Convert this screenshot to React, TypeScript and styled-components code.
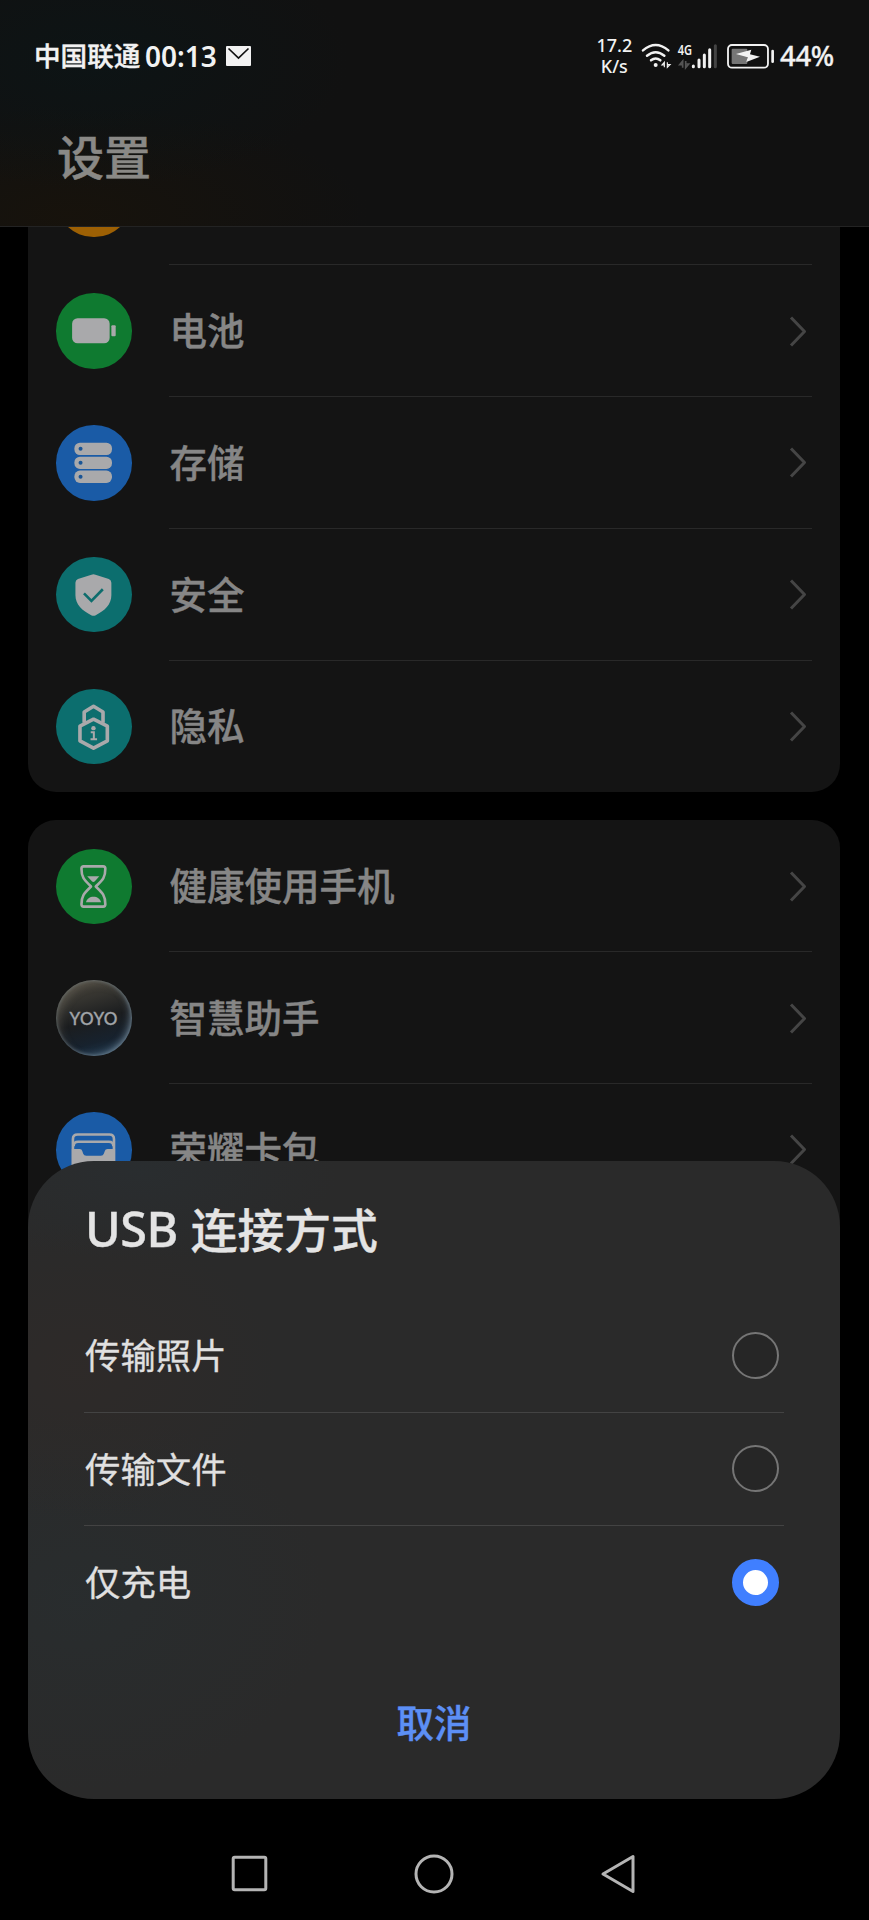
import React from "react";
import styled, { createGlobalStyle } from "styled-components";

const GlobalStyle = createGlobalStyle`
  * { box-sizing: border-box; }
  html, body { margin: 0; padding: 0; background: #000; }
  svg { display: block; flex-shrink: 0; }
`;

const cjk = `"Noto Sans CJK SC", sans-serif`;
const latin = `"Noto Sans", "Noto Sans CJK SC", sans-serif`;

const Screen = styled.main`
  position: relative;
  display: flex;
  flex-direction: column;
  width: 869px;
  height: 1920px;
  overflow: hidden;
  background: #000;
  font-family: ${cjk};
  font-weight: 500;
`;

const Header = styled.header`
  flex: none;
  height: 227px;
  border-bottom: 1px solid #232323;
  background:
    radial-gradient(ellipse 260px 130px at 90px 60px, rgba(10, 22, 24, 0.6), transparent),
    radial-gradient(ellipse 300px 110px at 70px 215px, rgba(25, 19, 10, 0.75), transparent),
    #111111;
`;

const StatusBar = styled.div`
  display: flex;
  align-items: center;
  justify-content: space-between;
  height: 112px;
  padding: 0 32px 0 34px;
  color: #f2f2f2;
`;

const StatusGroup = styled.div`
  display: flex;
  align-items: center;
`;

const Carrier = styled.span`
  width: 111px;
  padding-bottom: 2px;
  font-size: 26.6px;
  line-height: 40px;
  white-space: nowrap;
  -webkit-text-stroke: 0.4px currentColor;
`;

const Clock = styled.span`
  width: 81px;
  padding-bottom: 1px;
  font-family: ${latin};
  font-size: 28px;
  font-weight: 600;
  line-height: 40px;
  white-space: nowrap;
`;

const Speed = styled.div`
  width: 38px;
  margin-right: 8px;
  font-family: ${latin};
  font-size: 18px;
  font-weight: 500;
  line-height: 21px;
  text-align: center;
  white-space: nowrap;
`;

const StatusIcons = styled.div`
  display: flex;
  align-items: center;
  gap: 5px;

  svg:last-child {
    margin-left: 4px;
  }
`;

const Percent = styled.span`
  width: 58px;
  margin-left: 4px;
  padding: 0 0 1px 1px;
  font-family: ${latin};
  font-size: 27.5px;
  font-weight: 500;
  letter-spacing: -0.3px;
  line-height: 40px;
  white-space: nowrap;
  -webkit-text-stroke: 0.3px currentColor;
`;

const PageTitle = styled.h1`
  margin: 8px 0 0 57px;
  font-size: 47px;
  font-weight: 500;
  line-height: 70px;
  color: #8a8986;
  -webkit-text-stroke: 0.5px currentColor;
`;

const ListViewport = styled.div`
  flex: 1;
  overflow: hidden;
`;

const ListContent = styled.div`
  display: flex;
  flex-direction: column;
  gap: 28px;
  margin-top: -93.6px;
  padding: 0 29px 0 28px;
`;

const Card = styled.section<{ $minHeight?: number }>`
  min-height: ${(p) => p.$minHeight ?? 0}px;
  border-radius: 28px;
  background: #141414;
`;

const Row = styled.div`
  display: flex;
  align-items: center;
  height: 131.8px;
  padding-left: 28px;
`;

const RowBody = styled.div<{ $last?: boolean }>`
  display: flex;
  flex: 1;
  align-items: center;
  justify-content: space-between;
  height: 100%;
  margin: 0 28px 0 37.5px;
  padding-right: 5px;
  border-bottom: 1px solid ${(p) => (p.$last ? "transparent" : "#292929")};
`;

const RowLabel = styled.span`
  padding: 0 0 3px 0.5px;
  font-size: 37.5px;
  line-height: 56px;
  color: #868686;
  -webkit-text-stroke: 0.4px currentColor;
`;

const Disc = styled.div<{ $color: string }>`
  width: 75.5px;
  height: 75.5px;
  flex: none;
  border-radius: 50%;
  background: ${(p) => p.$color};
`;

const Orb = styled(Disc)`
  display: flex;
  align-items: center;
  justify-content: center;
  box-shadow:
    inset 0 0 3px 1px rgba(130, 145, 155, 0.35),
    inset -5px -3px 7px -3px rgba(130, 155, 175, 0.6),
    inset 5px 5px 9px -2px rgba(140, 135, 120, 0.35);
`;

const OrbText = styled.span`
  padding-top: 1px;
  font-family: Lato, sans-serif;
  font-size: 17px;
  font-weight: 500;
  letter-spacing: 0.4px;
  color: #a0a4a8;
  -webkit-text-stroke: 0.3px currentColor;
`;

const Sheet = styled.section`
  position: absolute;
  left: 28px;
  top: 1161px;
  display: flex;
  flex-direction: column;
  width: 812px;
  height: 638px;
  padding: 31px 56px 0;
  border-radius: 66px;
  background:
    radial-gradient(ellipse 200px 90px at 110px 10px, rgba(41, 47, 51, 0.6), transparent),
    radial-gradient(ellipse 200px 150px at 50px 210px, rgba(48, 42, 40, 0.65), transparent),
    radial-gradient(ellipse 250px 190px at 50px 440px, rgba(40, 46, 48, 0.65), transparent),
    #2a2a2a;
`;

const SheetTitle = styled.h2`
  display: flex;
  align-items: center;
  gap: 13px;
  height: 72px;
  margin: 0 0 35px;
  font-size: 46.8px;
  font-weight: 500;
  line-height: 72px;
  color: #e4e4e4;
  -webkit-text-stroke: 0.4px currentColor;
`;

const LatinWord = styled.span`
  padding-left: 1px;
  font-family: ${latin};
  font-size: 48.5px;
  letter-spacing: -0.5px;
  -webkit-text-stroke: 0.4px currentColor;
`;

const Option = styled.label<{ $last?: boolean }>`
  display: flex;
  align-items: center;
  justify-content: space-between;
  height: 113.6px;
  padding-right: 5px;
  border-bottom: 1px solid ${(p) => (p.$last ? "transparent" : "#434343")};
`;

const OptionText = styled.span`
  padding: 0 0 2px 1px;
  font-size: 35.4px;
  font-weight: 400;
  line-height: 54px;
  color: #e0e0e0;
  -webkit-text-stroke: 0.3px currentColor;
`;

const Radio = styled.span<{ $checked: boolean }>`
  width: 47px;
  height: 47px;
  border-radius: 50%;
  border: ${(p) => (p.$checked ? "11.5px solid #407fff" : "2px solid #757575")};
  background: ${(p) => (p.$checked ? "#fff" : "#262626")};
`;

const CancelButton = styled.button`
  align-self: center;
  margin-top: 53px;
  padding: 0 40px;
  border: 0;
  background: none;
  font-family: ${cjk};
  font-size: 37.5px;
  font-weight: 500;
  line-height: 56px;
  color: #5c8ff5;
  -webkit-text-stroke: 0.4px currentColor;
`;

const NavBar = styled.nav`
  display: flex;
  flex: none;
  align-items: center;
  justify-content: space-between;
  height: 93px;
  padding: 0 233px 0 231px;
`;

const ink = "#a9a9ab";

const MailIcon = () => (
  <svg width="25" height="20" viewBox="0 0 25 20">
    <rect width="25" height="20" rx="1" fill="#f2f2f2" />
    <path d="M2.5 2.5 12.5 12 22.5 2.5" fill="none" stroke="#111" strokeWidth="1.7" />
  </svg>
);

const WifiIcon = () => (
  <svg width="30.7" height="30" viewBox="214 60 92 90" fill="none" stroke="#f2f2f2" strokeWidth="7.5" strokeLinecap="round">
    <path d="M220 88Q258 56 296 88" />
    <path d="M232 104Q258 83 284 104" />
    <path d="M244 118Q258 107 272 118" />
    <circle cx="258" cy="132" r="6" fill="#f2f2f2" stroke="none" />
    <path d="M284 139V124L277 132H284M293 124V139L301 131H293" strokeWidth="3.5" strokeLinecap="butt" />
  </svg>
);

const SignalIcon = () => (
  <svg width="40.7" height="30" viewBox="320 60 122 90">
    <text x="322" y="101" fill="#f2f2f2" fontFamily="Noto Sans" fontSize="43" fontWeight="600" textLength="43" lengthAdjust="spacingAndGlyphs">
      4G
    </text>
    <path d="M337 140V120L328 131H337M346 120V140L355 129H346" fill="none" stroke="#555" strokeWidth="5" />
    <g stroke="#f2f2f2" strokeWidth="9" strokeLinecap="round">
      <path d="M369 135V137M386 117V137M402 102V137M418 86V137" />
      <path d="M435 74V137" stroke="#444" />
    </g>
  </svg>
);

const StatusBatteryIcon = () => (
  <svg width="48.3" height="30" viewBox="469 62 145 90">
    <rect x="472" y="74" width="120" height="68" rx="12" fill="none" stroke="#f2f2f2" strokeWidth="5.5" />
    <rect x="483" y="85" width="47" height="46" rx="3" fill="#767676" />
    <path d="M496 101 542 88 538 102 568 109 527 125 531 111Z" fill="#f2f2f2" />
    <path d="M606 92V124" stroke="#f2f2f2" strokeWidth="8" strokeLinecap="round" />
  </svg>
);

const Chevron = () => (
  <svg width="18" height="32" viewBox="0 0 18 32" fill="none" stroke="#454545" strokeWidth="3" strokeLinejoin="round">
    <path d="M2 2.5 15.5 16.5 2 30.5" />
  </svg>
);

const BatteryGlyph = () => (
  <svg viewBox="0 0 75 75" fill={ink}>
    <rect x="16" y="25" width="37.3" height="25" rx="5.5" />
    <rect x="55" y="32" width="4.3" height="11" rx="1" />
  </svg>
);

const StorageGlyph = () => (
  <svg viewBox="0 0 75 75" fill={ink}>
    {[17.6, 31.5, 45.3].map((y) => (
      <g key={y}>
        <rect x="18.3" y={y} width="37.3" height="12.2" rx="5.5" />
        <circle cx="24.4" cy={y + 6.1} r="2" fill="#1a5596" />
      </g>
    ))}
  </svg>
);

const ShieldGlyph = () => (
  <svg viewBox="0 0 75 75" fill="none">
    <path
      d="M35.2 17.6Q37.2 16.8 39.2 17.6L52.5 21.8Q55 22.8 55 25.5V38C55 47 48.5 53.5 39 58Q37.2 58.8 35.4 58C26 53.5 19.3 47 19.3 38V25.5Q19.3 22.8 21.8 21.8Z"
      fill={ink}
    />
    <path d="M27.8 36.2 35.2 43.6 46.5 32" stroke="#0d6d6d" strokeWidth="2.6" />
  </svg>
);

const PrivacyGlyph = () => (
  <svg viewBox="0 0 75 75" fill="none" stroke={ink} strokeWidth="3.6" strokeLinejoin="round">
    <path d="M37.3 30 51 36.8V51.5L37.3 58.8 23.8 51.5V36.8Z" />
    <path d="M28 33.5V22.8L37.3 17.2 46.7 22.8V33.5" />
    <circle cx="37.2" cy="38.9" r="2.2" fill={ink} stroke="none" />
    <path d="M34.5 43H37.6V49.8M34.3 49.8H40.8" strokeWidth="2" strokeLinejoin="miter" />
  </svg>
);

const HourglassGlyph = () => (
  <svg viewBox="0 0 75 75" fill="none" stroke={ink} strokeWidth="2.6" strokeLinejoin="round">
    <path d="M27.5 17.3H46.8Q49 17.3 49 19.5C49 29 46 31 39.5 37.3C46 43.5 49 46 49 55Q49 57.3 46.8 57.3H27.5Q25.3 57.3 25.3 55C25.3 46 28.5 43.5 34.8 37.3C28.5 31 25.3 29 25.3 19.5Q25.3 17.3 27.5 17.3Z" />
    <path d="M31 27H43L38.6 32Q37.1 33.6 35.6 32Z" fill={ink} stroke="none" />
    <path d="M29.8 53C31 45.5 43.5 45.5 44.7 53Z" fill={ink} stroke="none" />
  </svg>
);

const WalletGlyph = () => (
  <svg viewBox="0 0 75 75" fill="none" stroke={ink} strokeWidth="2.6">
    <path d="M16.8 54V27Q16.8 22.4 21.5 22.4H53Q57.6 22.4 57.6 27V54" />
    <path d="M17.5 34Q17.5 29.6 22 29.6H52.5Q57 29.6 57 34" />
    <path
      d="M15.7 36.8H23.5Q25.6 36.8 26.2 39L27 41.4Q27.8 43.4 30 43.4H44.6Q46.8 43.4 47.5 41.4L48.4 39Q49 36.8 51.2 36.8H58.7V52Q58.7 56 54 56H20.5Q15.7 56 15.7 52Z"
      fill={ink}
      stroke="none"
    />
  </svg>
);

type Item = { label: string; icon: React.ReactNode };

const deviceItems: Item[] = [
  { label: "", icon: <Disc $color="#9d6004" /> },
  { label: "电池", icon: <Disc $color="#0f7a30"><BatteryGlyph /></Disc> },
  { label: "存储", icon: <Disc $color="#1a5ba6"><StorageGlyph /></Disc> },
  { label: "安全", icon: <Disc $color="#0c6e6e"><ShieldGlyph /></Disc> },
  { label: "隐私", icon: <Disc $color="#0c6e6e"><PrivacyGlyph /></Disc> },
];

const serviceItems: Item[] = [
  { label: "健康使用手机", icon: <Disc $color="#0f7a30"><HourglassGlyph /></Disc> },
  {
    label: "智慧助手",
    icon: (
      <Orb $color="linear-gradient(165deg, #4a453b 0%, #34332f 28%, #1b1d1f 52%, #17222e 76%, #24415a 100%)">
        <OrbText>YOYO</OrbText>
      </Orb>
    ),
  },
  { label: "荣耀卡包", icon: <Disc $color="#1a5ba6"><WalletGlyph /></Disc> },
];

const SettingsCard = ({ items, minHeight }: { items: Item[]; minHeight?: number }) => (
  <Card $minHeight={minHeight}>
    {items.map((item, i) => (
      <Row key={i}>
        {item.icon}
        <RowBody $last={i === items.length - 1}>
          <RowLabel>{item.label}</RowLabel>
          {item.label && <Chevron />}
        </RowBody>
      </Row>
    ))}
  </Card>
);

const usbModes = ["传输照片", "传输文件", "仅充电"];

export default function App() {
  return (
    <>
      <GlobalStyle />
      <Screen>
        <Header>
          <StatusBar>
            <StatusGroup>
              <Carrier>中国联通</Carrier>
              <Clock>00:13</Clock>
              <MailIcon />
            </StatusGroup>
            <StatusGroup>
              <Speed>
                17.2
                <br />
                K/s
              </Speed>
              <StatusIcons>
                <WifiIcon />
                <SignalIcon />
                <StatusBatteryIcon />
              </StatusIcons>
              <Percent>44%</Percent>
            </StatusGroup>
          </StatusBar>
          <PageTitle>设置</PageTitle>
        </Header>
        <ListViewport>
          <ListContent>
            <SettingsCard items={deviceItems} />
            <SettingsCard items={serviceItems} minHeight={528} />
          </ListContent>
        </ListViewport>
        <NavBar>
          <svg width="37" height="37" viewBox="0 0 37 37" fill="none" stroke="#b4b4b4" strokeWidth="3">
            <rect x="2.2" y="2.2" width="32.6" height="32.6" rx="1.5" />
          </svg>
          <svg width="40" height="40" viewBox="0 0 40 40" fill="none" stroke="#b4b4b4" strokeWidth="3">
            <circle cx="20" cy="20" r="18" />
          </svg>
          <svg width="36" height="40" viewBox="0 0 36 40" fill="none" stroke="#b4b4b4" strokeWidth="3" strokeLinejoin="round">
            <path d="M3 20 33 2.5V37.5Z" />
          </svg>
        </NavBar>
        <Sheet>
          <SheetTitle>
            <LatinWord>USB</LatinWord>
            <span>连接方式</span>
          </SheetTitle>
          {usbModes.map((mode, i) => (
            <Option key={mode} $last={i === usbModes.length - 1}>
              <OptionText>{mode}</OptionText>
              <Radio $checked={mode === "仅充电"} />
            </Option>
          ))}
          <CancelButton>取消</CancelButton>
        </Sheet>
      </Screen>
    </>
  );
}
